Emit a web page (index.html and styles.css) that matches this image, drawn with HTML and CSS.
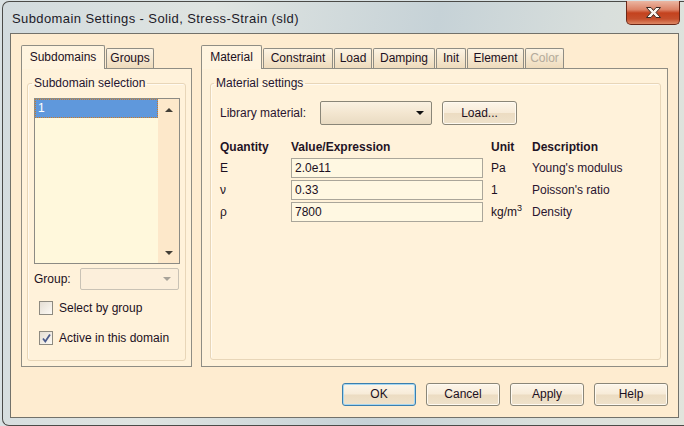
FILE: index.html
```html
<!DOCTYPE html>
<html>
<head>
<meta charset="utf-8">
<title>Subdomain Settings</title>
<link rel="stylesheet" href="styles.css">
</head>
<body>
<div class="window">
  <div class="titlebar">
    <span class="title">Subdomain Settings - Solid, Stress-Strain (sld)</span>
    <div class="close">
      <svg width="17" height="13" viewBox="0 0 17 13"><path d="M1.5 1.5 h4.5 l2.5 3 l2.5 -3 h4.5 l-4.5 5 l4.5 5 h-4.5 l-2.5 -3 l-2.5 3 h-4.5 l4.5 -5 z" fill="#fbf6ee" stroke="#3b2a24" stroke-width="1"/></svg>
    </div>
  </div>
  <div class="client">
    <div class="panels">
      <div class="col col-left">
        <div class="tabs">
          <div class="tab active w-subdomains">Subdomains</div>
          <div class="tab w-groups">Groups</div>
        </div>
        <div class="panel panel-left">
          <fieldset class="group">
            <legend>Subdomain selection</legend>
            <div class="listbox">
              <div class="list-items">
                <div class="item selected">1</div>
              </div>
              <div class="vscroll">
                <span class="tri tri-up"></span>
                <span class="tri tri-down"></span>
              </div>
            </div>
            <div class="group-row">
              <span>Group:</span>
              <div class="combo combo-disabled"><span class="tri tri-grey"></span></div>
            </div>
            <div class="check check-first">
              <span class="box"></span>
              <span>Select by group</span>
            </div>
            <div class="check check-second">
              <span class="box">
                <svg width="11" height="11" viewBox="0 0 11 11"><path d="M2 5.5 L4.3 8.5 L9 1.5" fill="none" stroke="#4b5b8c" stroke-width="1.8"/></svg>
              </span>
              <span>Active in this domain</span>
            </div>
          </fieldset>
        </div>
      </div>
      <div class="col col-right">
        <div class="tabs">
          <div class="tab active w-material">Material</div>
          <div class="tab w-constraint">Constraint</div>
          <div class="tab w-load">Load</div>
          <div class="tab w-damping">Damping</div>
          <div class="tab w-init">Init</div>
          <div class="tab w-element">Element</div>
          <div class="tab disabled w-color">Color</div>
        </div>
        <div class="panel panel-right">
          <fieldset class="group group-material">
            <legend>Material settings</legend>
            <div class="lib-row">
              <span class="lib-label">Library material:</span>
              <div class="combo combo-lib"><span class="tri tri-black"></span></div>
              <div class="btn btn-load">Load...</div>
            </div>
            <div class="props">
              <div class="hdr">Quantity</div>
              <div class="hdr">Value/Expression</div>
              <div class="hdr">Unit</div>
              <div class="hdr">Description</div>

              <div class="qty">E</div>
              <div class="input">2.0e11</div>
              <div class="unit">Pa</div>
              <div class="desc">Young's modulus</div>

              <div class="qty">ν</div>
              <div class="input">0.33</div>
              <div class="unit">1</div>
              <div class="desc">Poisson's ratio</div>

              <div class="qty">ρ</div>
              <div class="input">7800</div>
              <div class="unit">kg/m<sup>3</sup></div>
              <div class="desc">Density</div>
            </div>
          </fieldset>
        </div>
      </div>
    </div>
    <div class="buttons">
      <div class="btn btn-default">OK</div>
      <div class="btn">Cancel</div>
      <div class="btn">Apply</div>
      <div class="btn">Help</div>
    </div>
  </div>
  <div class="frame-bottom"></div>
</div>
</body>
</html>
```

FILE: styles.css
```css
* { box-sizing: border-box; }
html, body { margin: 0; height: 100%; }
body {
  background: #d9e1e3;
  padding: 1px 0 0 2px;
  font: 12px "Liberation Sans", Arial, sans-serif;
  color: #1c1022;
  overflow: hidden;
}
.window {
  width: 682px;
  height: 425px;
  border: 1px solid #4b4b48;
  border-right: none;
  border-radius: 7px 0 0 7px;
  background: linear-gradient(100deg, #d2dbde 0%, #dfe4e1 28%, #c6d2d7 58%, #d9dfdc 80%, #e2e4dc 100%);
  display: flex;
  flex-direction: column;
}
.titlebar {
  height: 31px;
  flex: none;
  display: flex;
  justify-content: space-between;
  align-items: flex-start;
  padding-left: 9px;
}
.title {
  margin-top: 9px;
  line-height: 16px;
  font-size: 13px;
  letter-spacing: 0.4px;
  color: #1c1a28;
}
.close {
  width: 54px;
  height: 24px;
  margin-top: -1px;
  margin-right: 4px;
  border: 1px solid #6b2717;
  border-top: none;
  border-radius: 0 0 5px 5px;
  background: linear-gradient(#ebb6a2 0%, #dc8266 38%, #c4421e 52%, #c54f2c 78%, #de8864 100%);
  display: flex;
  align-items: center;
  justify-content: center;
}
.client {
  margin-left: 7px;
  width: 669px;
  height: 385px;
  flex: none;
  border: 1px solid #72716a;
  background: #feecd0;
  padding: 11px 10px 11px 10px;
  display: flex;
  flex-direction: column;
}
.frame-bottom { flex: 1; }

.panels { display: flex; gap: 9px; height: 322px; flex: none; }
.col { display: flex; flex-direction: column; }
.col-left { width: 171px; }
.col-right { width: 467px; }

.tabs {
  display: flex;
  align-items: flex-end;
  height: 24px;
  margin-bottom: -1px;
  position: relative;
  z-index: 1;
  flex: none;
}
.tab {
  height: 20px;
  margin-bottom: 1px;
  margin-right: 1px;
  border: 1px solid #8f8d84;
  border-bottom: none;
  border-radius: 2px 2px 0 0;
  background: linear-gradient(#fdf4e4, #eedbbc);
  text-align: center;
  line-height: 19px;
  white-space: nowrap;
}
.tab.active {
  height: 24px;
  margin-bottom: 0;
  background: #fff4df;
  line-height: 22px;
}
.tab.disabled { color: #b3aa9b; }
.w-subdomains { width: 84px; }
.w-groups { width: 48px; }
.w-material { width: 61px; }
.w-constraint { width: 70px; }
.w-load { width: 38px; }
.w-damping { width: 62px; }
.w-init { width: 30px; }
.w-element { width: 57px; }
.w-color { width: 39px; }

.panel {
  flex: 1;
  border: 1px solid #8f8d84;
  background: #fff2da;
  display: flex;
}
.panel-left { padding: 7px 5px 5px 5px; }
.panel-right { padding: 7px 6px 6px 8px; }

.group {
  flex: 1;
  margin: 0;
  min-width: 0;
  border: 1px solid #e8d6b8;
  box-shadow: inset 1px 1px 0 #fffaf0;
  border-radius: 3px;
  padding: 0 5px 0 6px;
}
.group legend {
  margin-left: -2px;
  padding: 0 2px;
  line-height: 14px;
  color: #26152e;
}
.group-material { padding: 0 10px 0 9px; }
.group-material legend { margin-left: -6px; }

.listbox {
  margin-top: 8px;
  height: 166px;
  border: 1px solid #8c8b84;
  background: #fff8dc;
  display: flex;
}
.list-items { flex: 1; }
.item.selected {
  height: 19px;
  background: #5f98dc;
  color: #ffffff;
  border: 1px dotted #c97a2a;
  padding-left: 2px;
  line-height: 17px;
}
.vscroll {
  width: 21px;
  background: #fde8ca;
  display: flex;
  flex-direction: column;
  justify-content: space-between;
  align-items: center;
  padding: 9px 0 8px 1px;
}
.tri {
  width: 0;
  height: 0;
  border-left: 4px solid transparent;
  border-right: 4px solid transparent;
}
.tri-up { border-bottom: 4px solid #433e36; }
.tri-down { border-top: 4px solid #433e36; }
.tri-grey { border-top: 4px solid #a8a399; }
.tri-black { border-top: 4px solid #111111; }

.group-row {
  display: flex;
  align-items: center;
  justify-content: space-between;
  margin-top: 4px;
  height: 22px;
}
.combo {
  height: 22px;
  border: 1px solid #c9c2b5;
  border-radius: 2px;
  display: flex;
  align-items: center;
  justify-content: flex-end;
}
.combo-disabled {
  width: 99px;
  margin-right: 1px;
  background: #fcefdb;
  padding-right: 7px;
}
.combo-lib {
  width: 112px;
  height: 24px;
  border-color: #8a8678;
  background: linear-gradient(#fbf2e2 0%, #f3e6d0 50%, #e9dbc2 100%);
  padding-right: 7px;
}

.check {
  display: flex;
  align-items: center;
  height: 20px;
  padding-left: 5px;
}
.check-first { margin-top: 8px; }
.check-second { margin-top: 10px; }
.box {
  width: 14px;
  height: 14px;
  border: 1px solid #8d8a80;
  background: linear-gradient(135deg, #e4ded4, #fdfaf4);
  margin-right: 6px;
  display: flex;
  align-items: center;
  justify-content: center;
}

.lib-row {
  display: flex;
  align-items: center;
  margin-top: 11px;
  height: 24px;
}
.lib-label { width: 100px; color: #2a1530; }

.btn {
  width: 74px;
  height: 23px;
  border: 1px solid #8a8678;
  border-radius: 3px;
  background: linear-gradient(#fdf6ea 0%, #f7ebd8 48%, #ecdcc2 52%, #efe2cb 100%);
  box-shadow: inset 0 0 0 1px #fffaf1;
  text-align: center;
  line-height: 21px;
}
.btn-load { width: 75px; height: 24px; margin-left: 10px; line-height: 22px; }
.btn-default {
  border-color: #3b7fae;
  box-shadow: inset 0 0 0 1px #a6d6f0;
}

.props {
  display: grid;
  grid-template-columns: 71px 200px 41px 1fr;
  grid-template-rows: 18px;
  grid-auto-rows: 20px;
  row-gap: 2px;
  margin-top: 13px;
  align-items: center;
}
.hdr { font-weight: bold; color: #1f1426; }
.input {
  width: 192px;
  height: 20px;
  border: 1px solid #aaa69a;
  background: #fff8e2;
  padding-left: 3px;
  line-height: 18px;
}
.unit sup { font-size: 9px; line-height: 0; }
.desc { color: #2a1530; }

.buttons {
  display: flex;
  justify-content: flex-end;
  gap: 10px;
  margin-top: 16px;
  flex: none;
}
```
